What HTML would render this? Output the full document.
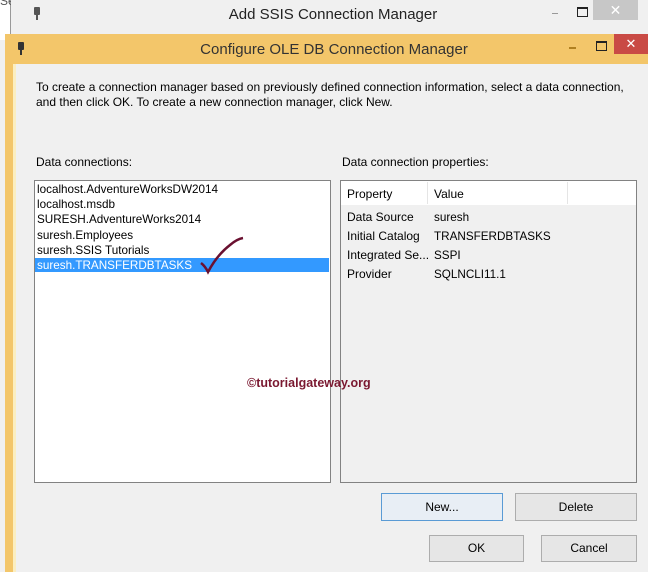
<!DOCTYPE html>
<html><head><style>
body{margin:0;width:648px;height:572px;overflow:hidden;background:#f0f0f0;font-family:"Liberation Sans",sans-serif;position:relative}
.a{position:absolute}
.t{font-size:12px;color:#000;white-space:nowrap}
.btn{position:absolute;background:#e6e6e6;border:1px solid #adadad;font-size:12px;text-align:center;box-sizing:border-box}
</style></head><body>
<div class="a" style="left:0;top:0;width:10px;height:40px;background:#fff;border-right:1px solid #999"></div>
<div class="a t" style="left:0;top:-6px;color:#555">Se</div>
<div class="a" style="left:11px;top:0;width:637px;height:34px;background:#f0f0f0"></div>
<div class="a" style="left:34px;top:7px;width:6px;height:8px;background:#555;border-radius:1px"></div>
<div class="a" style="left:36px;top:15px;width:2px;height:5px;background:#555"></div>
<div class="a t" style="left:0;width:666px;text-align:center;top:6px;font-size:15px;color:#222">Add SSIS Connection Manager</div>
<div class="a" style="left:552px;top:13px;width:6px;height:1px;background:#999"></div>
<div class="a" style="left:577px;top:7px;width:9px;height:7px;border:1px solid #222;border-top-width:2px"></div>
<div class="a" style="left:593px;top:0;width:45px;height:20px;background:#c7c7c7;color:#fff;text-align:center;font-size:14px;line-height:20px">✕</div>
<div class="a" style="left:5px;top:34px;width:643px;height:538px;background:#f3c66a"></div>
<div class="a" style="left:13px;top:64px;width:635px;height:508px;background:#f0f0f0;border-left:3px solid #fbeec0;box-sizing:border-box"></div>
<div class="a" style="left:18px;top:42px;width:6px;height:8px;background:#333;border-radius:1px"></div>
<div class="a" style="left:20px;top:50px;width:2px;height:5px;background:#333"></div>
<div class="a t" style="left:0;width:668px;text-align:center;top:41px;font-size:15px;color:#333">Configure OLE DB Connection Manager</div>
<div class="a" style="left:569px;top:47px;width:7px;height:2px;background:#b08020"></div>
<div class="a" style="left:596px;top:41px;width:9px;height:7px;border:1px solid #222;border-top-width:2px"></div>
<div class="a" style="left:614px;top:34px;width:34px;height:20px;background:#c94a45;color:#fff;text-align:center;font-size:13px;line-height:20px">✕</div>
<div class="a t" style="left:36px;top:80px;line-height:15px">To create a connection manager based on previously defined connection information, select a data connection,<br>and then click OK. To create a new connection manager, click New.</div>
<div class="a t" style="left:36px;top:155px">Data connections:</div>
<div class="a t" style="left:342px;top:155px">Data connection properties:</div>
<div class="a" style="left:34px;top:180px;width:297px;height:303px;background:#fff;border:1px solid #828282;box-sizing:border-box"></div>
<div class="a" style="left:35px;top:258px;width:294px;height:14px;background:#3399ff"></div>
<div class="a t" style="left:37px;top:182px;line-height:15.2px;font-size:11.7px">localhost.AdventureWorksDW2014<br>localhost.msdb<br>SURESH.AdventureWorks2014<br>suresh.Employees<br>suresh.SSIS Tutorials<br><span style="color:#fff">suresh.TRANSFERDBTASKS</span></div>
<svg class="a" style="left:195px;top:230px" width="55" height="45"><path d="M6 33 Q10 36 13 42 Q22 25 35 15 Q42 9 48 8" stroke="#6a1030" stroke-width="2.5" fill="none"/></svg>
<div class="a" style="left:340px;top:180px;width:297px;height:303px;background:#f0f0f0;border:1px solid #828282;box-sizing:border-box"></div>
<div class="a" style="left:341px;top:181px;width:295px;height:24px;background:#fff"></div>
<div class="a" style="left:427px;top:182px;width:1px;height:22px;background:#e5e5e5"></div>
<div class="a" style="left:567px;top:182px;width:1px;height:22px;background:#e5e5e5"></div>
<div class="a t" style="left:347px;top:187px">Property</div>
<div class="a t" style="left:434px;top:187px">Value</div>
<div class="a t" style="left:347px;top:208px;line-height:19px">Data Source<br>Initial Catalog<br>Integrated Se...<br>Provider</div>
<div class="a t" style="left:434px;top:208px;line-height:19px;font-size:11.7px">suresh<br>TRANSFERDBTASKS<br>SSPI<br>SQLNCLI11.1</div>
<div class="a t" style="left:247px;top:376px;font-weight:bold;font-size:12.5px;color:#7a1830">©tutorialgateway.org</div>
<div class="btn" style="left:381px;top:493px;width:122px;height:28px;line-height:26px;border-color:#5a9bd5;background:#e8eef5">New...</div>
<div class="btn" style="left:515px;top:493px;width:122px;height:28px;line-height:26px">Delete</div>
<div class="btn" style="left:429px;top:535px;width:95px;height:27px;line-height:25px">OK</div>
<div class="btn" style="left:541px;top:535px;width:96px;height:27px;line-height:25px">Cancel</div>
</body></html>
